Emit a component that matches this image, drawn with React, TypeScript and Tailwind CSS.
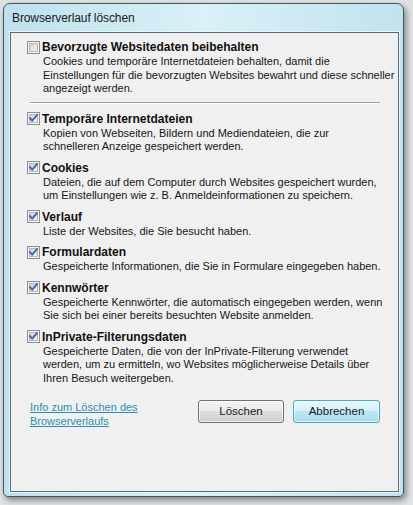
import React from 'react';

type Section = {
  label: string;
  checked: boolean;
  lines: string[];
};

const sections: Section[] = [
  {
    label: 'Temporäre Internetdateien',
    checked: true,
    lines: ['Kopien von Webseiten, Bildern und Mediendateien, die zur', 'schnelleren Anzeige gespeichert werden.'],
  },
  {
    label: 'Cookies',
    checked: true,
    lines: [
      'Dateien, die auf dem Computer durch Websites gespeichert wurden,',
      'um Einstellungen wie z. B. Anmeldeinformationen zu speichern.',
    ],
  },
  {
    label: 'Verlauf',
    checked: true,
    lines: ['Liste der Websites, die Sie besucht haben.'],
  },
  {
    label: 'Formulardaten',
    checked: true,
    lines: ['Gespeicherte Informationen, die Sie in Formulare eingegeben haben.'],
  },
  {
    label: 'Kennwörter',
    checked: true,
    lines: [
      'Gespeicherte Kennwörter, die automatisch eingegeben werden, wenn',
      'Sie sich bei einer bereits besuchten Website anmelden.',
    ],
  },
  {
    label: 'InPrivate-Filterungsdaten',
    checked: true,
    lines: [
      'Gespeicherte Daten, die von der InPrivate-Filterung verwendet',
      'werden, um zu ermitteln, wo Websites möglicherweise Details über',
      'Ihren Besuch weitergeben.',
    ],
  },
];

function Checkbox({ checked }: { checked: boolean }) {
  return (
    <svg width="13" height="13" viewBox="0 0 13 13" className="shrink-0">
      <defs>
        <linearGradient id="cbfill" x1="0" y1="0" x2="1" y2="1">
          <stop offset="0" stopColor="#cdcdcd" />
          <stop offset="1" stopColor="#f7f7f7" />
        </linearGradient>
      </defs>
      <rect x="0.5" y="0.5" width="12" height="12" fill="#f4f4f4" stroke="#8e8f8f" />
      <rect x="2.5" y="2.5" width="8" height="8" fill="url(#cbfill)" stroke="#b9b9b9" />
      {checked && (
        <path
          d="M3 6.2 L5.2 8.6 L10 3.2"
          fill="none"
          stroke="#3d67b8"
          strokeWidth="1.9"
          strokeLinecap="square"
        />
      )}
    </svg>
  );
}

function Item({ label, checked, lines }: Section) {
  return (
    <div className="flex flex-col">
      <div className="flex h-[16px] items-center gap-[2px]">
        <Checkbox checked={checked} />
        <span className="text-[12px] font-bold text-[#111]">{label}</span>
      </div>
      <div className="pl-[16px] text-[11px] leading-[13.5px] text-[#161616]">
        {lines.map((l) => (
          <div key={l} className="whitespace-nowrap">
            {l}
          </div>
        ))}
      </div>
    </div>
  );
}

export default function App() {
  return (
    <div className="h-[505px] w-[413px] overflow-hidden bg-[#dfe3e6] pl-[3px] pt-[3px] font-['Liberation_Sans',Arial,sans-serif]">
      <div className="flex h-[494px] w-[401px] flex-col rounded-t-[7px] rounded-b-[5px] border border-[#4a545c] bg-gradient-to-r from-[#bde1ed] via-[#d9f1f8] to-[#c0e3ee] pb-[4px] pl-[6px] pr-[4px] shadow-[2px_3px_6px_rgba(0,0,0,0.45)]">
        <div className="flex h-[28px] shrink-0 items-center pl-[2px] text-[12px] tracking-[-0.1px] text-[#1a1a1a]">
          Browserverlauf löschen
        </div>
        <div className="flex flex-1 flex-col border border-[#56697a] bg-[#f0f0f0] pt-[6px] pl-[16px] shadow-[0_0_0_1px_#e9f7fb]">
          <Item
            label="Bevorzugte Websitedaten beibehalten"
            checked={false}
            lines={[
              'Cookies und temporäre Internetdateien behalten, damit die',
              'Einstellungen für die bevorzugten Websites bewahrt und diese schneller',
              'angezeigt werden.',
            ]}
          />
          <div className="ml-[3px] mt-[6px] h-[2px] w-[350px] border-t border-[#a0a0a0] border-b-white border-b" />
          <div className="mt-[7px] flex flex-col gap-[6px]">
            {sections.map((s) => (
              <Item key={s.label} {...s} />
            ))}
          </div>
          <div className="mt-[15px] flex items-start">
            <a
              href="#"
              className="ml-[3px] block text-[11px] leading-[14px] text-[#2a91ad] underline underline-offset-[1px]"
            >
              Info zum Löschen des
              <br />
              Browserverlaufs
            </a>
            <div className="ml-auto mr-[18px] flex gap-[9px]">
              <button className="h-[23px] w-[86px] rounded-[3px] border border-[#707070] bg-[linear-gradient(#f3f3f3_0%,#ebebeb_45%,#dddddd_50%,#cfcfcf_100%)] text-[11.5px] text-[#1a1a1a] shadow-[inset_0_0_0_1px_rgba(255,255,255,0.7)]">
                Löschen
              </button>
              <button className="h-[23px] w-[87px] rounded-[3px] border border-[#4aa6c1] bg-[linear-gradient(#e8f8fd_0%,#d4f0f9_45%,#b9e6f4_50%,#a7dcee_100%)] text-[11.5px] text-[#1a1a1a] shadow-[inset_0_0_0_1px_rgba(255,255,255,0.6)]">
                Abbrechen
              </button>
            </div>
          </div>
        </div>
      </div>
    </div>
  );
}
